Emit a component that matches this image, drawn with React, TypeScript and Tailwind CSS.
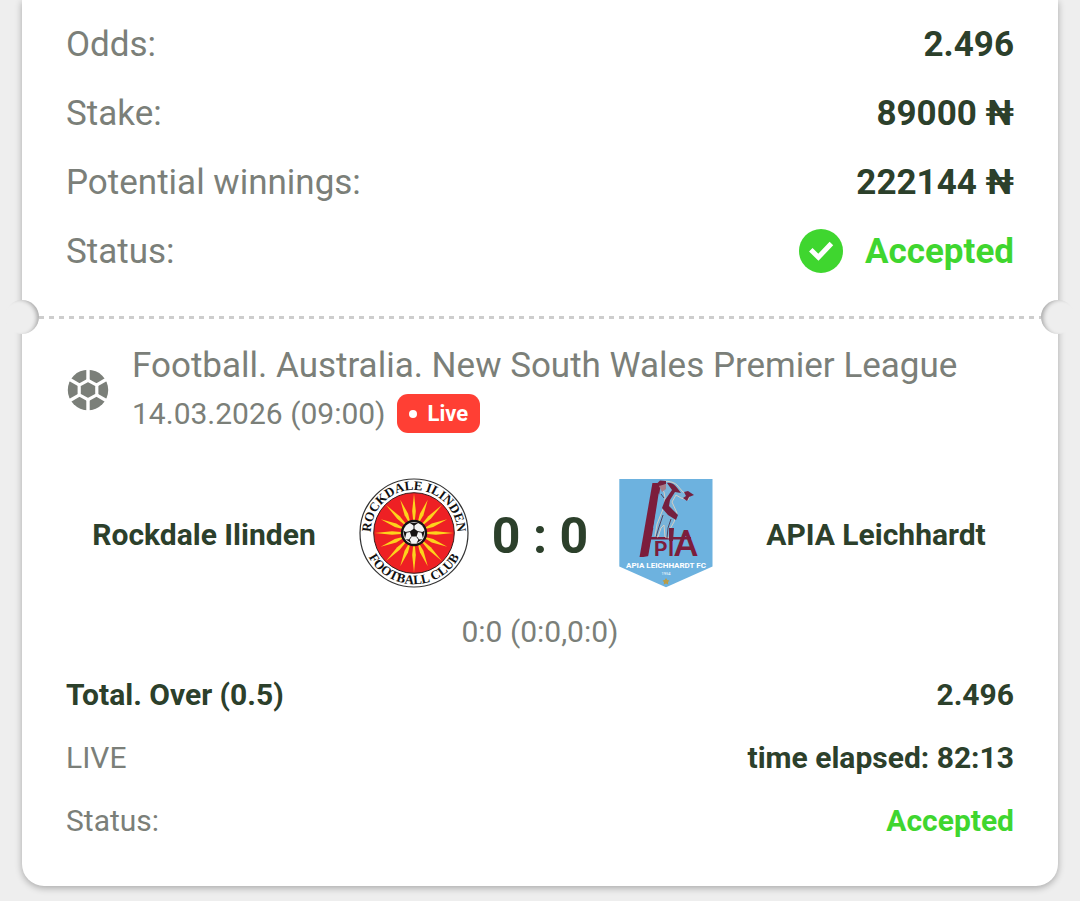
import type { ReactNode } from "react";

export default function App() {
  return (
    <div className="min-h-screen bg-[#eeeeee] px-[22px] pb-[15px] font-[Roboto,sans-serif] text-[#7b7f79]">
      <main className="rounded-b-[22px] bg-white shadow-[0_2px_7px_rgba(0,0,0,0.3)]">
        <BetSummary />
        <TicketDivider />
        <BetEvent />
      </main>
    </div>
  );
}

function BetSummary() {
  return (
    <dl className="flex flex-col gap-[23px] px-11 pt-[22px] pb-[25px] text-[35px] leading-[46px]">
      <Row label="Odds:">2.496</Row>
      <Row label="Stake:">89000 ₦</Row>
      <Row label="Potential winnings:">222144 ₦</Row>
      <Row label="Status:" accepted>
        <CheckIcon />
        Accepted
      </Row>
    </dl>
  );
}

function Row({
  label,
  accepted = false,
  strong = false,
  children,
}: {
  label: string;
  accepted?: boolean;
  strong?: boolean;
  children: ReactNode;
}) {
  return (
    <div className="flex items-center justify-between">
      <dt className={strong ? "font-bold text-[#2c402b]" : ""}>{label}</dt>
      <dd
        className={
          accepted
            ? "flex items-start gap-[22px] font-bold text-[#3fd62f]"
            : "font-bold text-[#2c402b]"
        }
      >
        {children}
      </dd>
    </div>
  );
}

function TicketDivider() {
  return (
    <div className="-mx-[17px] flex items-center justify-between">
      <span className="h-[34px] w-[34px] rounded-full bg-[#eeeeee] shadow-[inset_-4px_1px_4px_-2px_rgba(0,0,0,0.3)]" />
      <span className="h-[3px] flex-1 bg-[repeating-linear-gradient(90deg,#cdcdcd_0_5px,transparent_5px_10px)]" />
      <span className="h-[34px] w-[34px] rounded-full bg-[#eeeeee] shadow-[inset_4px_1px_4px_-2px_rgba(0,0,0,0.3)]" />
    </div>
  );
}

function BetEvent() {
  return (
    <section className="px-11 pt-[10px] pb-[45px] text-[30px] leading-10">
      <header className="flex items-center gap-[22px]">
        <BallIcon />
        <div>
          <h2 className="text-[35px] leading-[44px]">
            Football. Australia. New South Wales Premier League
          </h2>
          <div className="mt-[6px] flex h-[39px] items-center gap-[11px]">
            <time dateTime="2026-03-14T09:00">14.03.2026 (09:00)</time>
            <span className="flex h-[39px] items-center gap-[11px] rounded-[11px] bg-[#ff3f34] px-3 text-[22px] font-bold text-white">
              <span className="h-2 w-2 rounded-full bg-white" />
              Live
            </span>
          </div>
        </div>
      </header>

      <div className="mt-[45px] flex items-center">
        <p className="flex-1 pt-1 text-center font-bold text-[#2c402b]">Rockdale Ilinden</p>
        <div className="mx-[17px] flex items-center">
          <RockdaleCrest />
          <p className="w-[142px] pt-[5px] text-center text-[50px] leading-[56px] font-bold text-[#2c402b]">
            0 : 0
          </p>
          <ApiaCrest />
        </div>
        <p className="flex-1 pt-1 text-center font-bold text-[#2c402b]">APIA Leichhardt</p>
      </div>
      <p className="mt-6 text-center">0:0 (0:0,0:0)</p>

      <dl className="mt-[23px] flex flex-col gap-[23px]">
        <Row label="Total. Over (0.5)" strong>
          2.496
        </Row>
        <Row label="LIVE">time elapsed: 82:13</Row>
        <Row label="Status:" accepted>
          Accepted
        </Row>
      </dl>
    </section>
  );
}

function CheckIcon() {
  return (
    <svg className="h-11 w-11" viewBox="0 0 44 44" aria-hidden="true">
      <circle cx="22" cy="22" r="22" fill="#3fd62f" />
      <path d="M11.8 20.8 19.4 28.2 32.4 14.6" fill="none" stroke="#fff" strokeWidth="5" />
    </svg>
  );
}

function BallIcon() {
  return (
    <svg className="mt-[2px] h-11 w-11 shrink-0" viewBox="-22 -22 44 44" aria-hidden="true">
      <circle r="20.2" fill="#7b7f79" />
      <path d="M0-9.6 8.8-4.9V4.9L0 9.6-8.8 4.9V-4.9Z" fill="none" stroke="#fff" strokeWidth="3.2" />
      <path
        d="M0-9V-22M0 9V22M8-4.6 19-11M8 4.6 19 11M-8-4.6-19-11M-8 4.6-19 11"
        stroke="#fff"
        strokeWidth="3.4"
      />
    </svg>
  );
}

const rays = Array.from({ length: 16 }, (_, i) => i * 22.5);

function RockdaleCrest() {
  return (
    <svg
      className="h-[110px] w-[110px] shrink-0"
      viewBox="-55 -55 110 110"
      role="img"
      aria-label="Rockdale Ilinden Football Club"
    >
      <defs>
        <path id="crest-top" d="M-42.9 6A43.3 43.3 0 1 1 42.9 6" />
        <path id="crest-bottom" d="M-50.2 10A51.2 51.2 0 0 0 50.2 10" />
      </defs>
      <circle r="54" fill="#fff" stroke="#333" strokeWidth="1.2" />
      <circle r="40.3" fill="#ee2024" stroke="#3a1a1a" strokeWidth="1" />
      {rays.map((angle, i) => (
        <path
          key={angle}
          d={i % 2 ? "M-.9 -13-1.9 -20 0 -36 1.9 -20 .9 -13Z" : "M-.9 -13-1.8 -22 0 -39.5 1.8 -22 .9 -13Z"}
          fill="#fdd31c"
          transform={`rotate(${angle})`}
        />
      ))}
      <circle r="13.2" fill="#161313" />
      <circle r="10.8" fill="#f4f4f4" />
      <path d="M0-4.4 4.2-1.4 2.6 3.6H-2.6L-4.2-1.4Z" fill="#161313" />
      <path
        d="M-4.2-9.9 0-7.2 4.2-9.9ZM10.7-2.5 7.4-.5 9 5.4ZM-10.7-2.5-7.4-.5-9 5.4ZM2.5 10.3 4.4 6.6 8.4 6.2ZM-2.5 10.3-4.4 6.6-8.4 6.2Z"
        fill="#161313"
      />
      <path
        d="M0-4V-8M4-1.4 8-.6M-4-1.4-8-.6M2.6 3.6 5 7M-2.6 3.6-5 7"
        stroke="#161313"
        strokeWidth=".9"
      />
      <g
        className="font-['Liberation_Serif',serif] text-[13px] font-bold"
        fill="#111"
        textAnchor="middle"
      >
        <text>
          <textPath href="#crest-top" startOffset="50%">
            ROCKDALE ILINDEN
          </textPath>
        </text>
        <text>
          <textPath href="#crest-bottom" startOffset="50%">
            FOOTBALL CLUB
          </textPath>
        </text>
      </g>
    </svg>
  );
}

function ApiaCrest() {
  return (
    <svg
      className="h-[110px] w-[110px] shrink-0"
      viewBox="0 0 110 110"
      role="img"
      aria-label="APIA Leichhardt FC"
    >
      <defs>
        <clipPath id="tall-letter">
          <path d="M24 79 41 5H50L46 30 37 79Z" />
        </clipPath>
      </defs>
      <path d="M8.3 1H101.5V88.5L55 109.3 8.3 88.5Z" fill="#6db2df" />
      <g fill="#7c1d3c">
        <g clipPath="url(#tall-letter)">
          <text transform="translate(27 80) rotate(-11)" className="text-[100px]">
            A
          </text>
        </g>
        <path d="M32 59H80V61.5H32Z" />
        <text x="43" y="78" className="text-[21px] font-bold">
          P
        </text>
        <text x="57" y="78" className="text-[21px] font-bold">
          I
        </text>
        <text x="63" y="78" className="text-[36px] font-medium">
          A
        </text>
      </g>
      {/* discus thrower */}
      <path
        d="M47 5C52 2 62 3 66 7L72 14 79 17 77 22 70 20 65 17 61 24 66 35 63 44 59 51 58 60 54 59 53 47 50 50 47 59 44 58 46 46 50 36 53 29 54 20 53 14Z"
        fill="#79b4da"
        stroke="#e0cfc0"
        strokeWidth=".9"
      />
      <path
        d="M56 5C62 4 65 8 70 15L64 14 59 22 58 28 67 37 65 42 57 37 51 30 54 22 61 12ZM73 14 77 13 83 17 78 19 76 23 72 20 75 18Z"
        fill="#74203f"
      />
      <path d="M45.5 6 49 2.5 55 3 55 6 50 9Z" fill="#74203f" />
      <path d="M48 8 55 6 55 11 51 14Z" fill="#a87c88" />
      <path d="M58 50H63L62 63H58Z" fill="#74203f" />
      <path
        d="M52 37 48 49 45 59M60 41 57 50 56 60M50 16 53 20"
        fill="none"
        stroke="#4b3550"
        strokeWidth=".9"
      />
      <g fill="#fff" textAnchor="middle">
        <text x="55" y="90" className="text-[8px] font-bold">
          APIA LEICHHARDT FC
        </text>
        <text x="55" y="97" className="text-[4px]">
          1954
        </text>
      </g>
      <path
        d="M55 100 56.2 102 58.4 102.4 57 104.2 57.2 106.4 55 105.6 52.8 106.4 53 104.2 51.6 102.4 53.8 102Z"
        fill="#b99b45"
      />
    </svg>
  );
}
